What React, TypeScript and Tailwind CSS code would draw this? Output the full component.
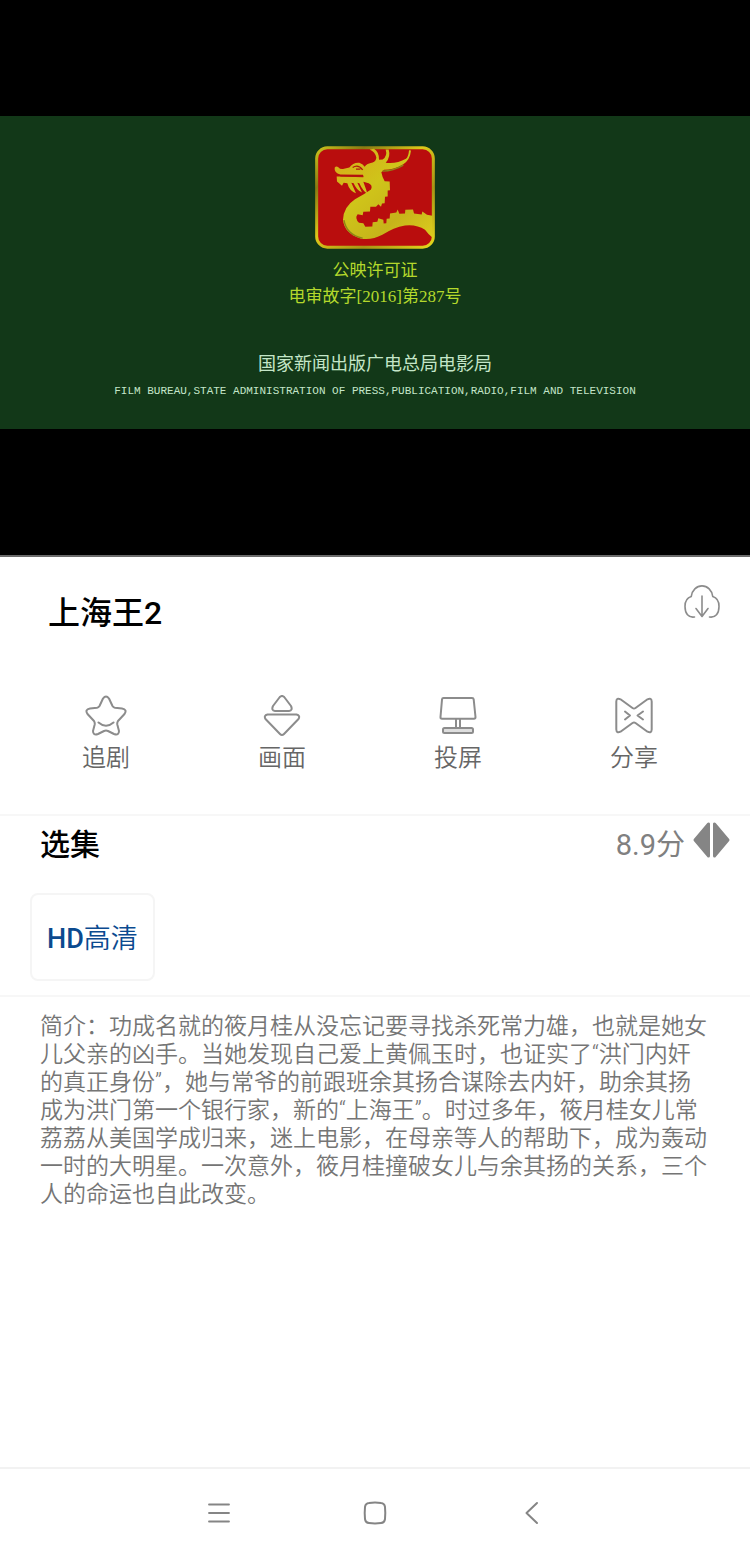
import type { ReactNode } from "react";

const stroke = {
  fill: "none",
  stroke: "currentColor",
  strokeLinecap: "round" as const,
  strokeLinejoin: "round" as const,
};

function DragonSeal() {
  return (
    <svg viewBox="45 32 360 308" className="h-[103px] w-[120px]" aria-hidden="true">
      <defs>
        <linearGradient id="gold" x1="0" y1="0" x2="1" y2="1">
          <stop offset="0" stopColor="#c9c21c" />
          <stop offset="0.2" stopColor="#8a7a12" />
          <stop offset="0.45" stopColor="#dcc81a" />
          <stop offset="0.7" stopColor="#a89414" />
          <stop offset="1" stopColor="#e6d81c" />
        </linearGradient>
        <linearGradient id="body" x1="0" y1="0" x2="1" y2="1">
          <stop offset="0" stopColor="#d8a818" />
          <stop offset="0.4" stopColor="#cfc41a" />
          <stop offset="0.7" stopColor="#c6b41a" />
          <stop offset="1" stopColor="#dccb1e" />
        </linearGradient>
      </defs>
      <rect x="50" y="37" width="350" height="298" rx="32" fill="#b90d0d" stroke="url(#gold)" strokeWidth="9" />
      <path
        fill="url(#body)"
        d="M104 97 Q108 90 115 95 Q121 103 132 100 L148 96 Q160 80 178 82 Q190 86 194 94 Q200 84 218 81 Q228 78 229 66 Q226 50 209 42 L222 40 Q238 50 237 73 L248 72 Q263 62 257 42 L266 42 Q273 64 257 82 Q290 86 318 70 Q326 62 327 44 L333 45 Q330 74 309 87 Q282 103 252 103 L244 110 Q247 126 254 137 L269 138 L270 164 L263 165 L263 183 L255 184 L254 203 L246 204 L243 214 L235 206 L228 214 L211 214 L210 228 L190 229 L188 239 L173 236 Q163 247 177 262 L190 263 L196 274 L217 273 L218 260 L232 259 L235 248 L250 253 L251 264 L259 263 L260 250 L269 249 L270 234 L289 231 L293 222 L298 235 L315 234 L316 223 L339 222 L342 234 L365 237 L367 228 L381 238 L397 241 L397 306 Q386 298 375 283 Q350 266 315 270 Q281 276 247 298 Q215 315 181 309 Q133 294 129 253 Q130 214 165 191 Q194 176 213 162 Q219 149 206 143 L190 139 L199 164 L202 175 Q188 165 178 143 L172 142 L186 171 Q169 163 161 143 L154 142 L168 173 Q148 166 142 143 L131 142 L126 151 L111 138 L110 123 L190 124 L189 118 L121 117 Q102 113 104 97 Z"
      />
      <path fill="none" stroke="#b0170f" strokeWidth="4" d="M158 96 Q174 85 188 103 M168 101 L181 101 M121 121 L190 123" />
      <path fill="none" stroke="#8e8515" strokeWidth="4" d="M132 254 Q139 298 188 308 M247 107 Q280 107 310 89" />
    </svg>
  );
}

function StarIcon() {
  return (
    <svg viewBox="0 0 42 42" className="size-[42px]" {...stroke} strokeWidth="2" aria-hidden="true">
      <path d="M18 3.5 Q21 -.5 24 3.5 L27.5 11 Q28.5 12.5 30 12.8 L37 13.5 Q42.5 14.5 39.5 19 L33 26 Q32 27.5 32.3 29.5 L34 36 Q34 40.8 29 39 L23 36 Q21 35.2 19 36 L13 39 Q8 40.8 8 36 L9.7 29.5 Q10 27.5 9 26 L2.5 19 Q-.5 14.5 5 13.5 L12 12.8 Q13.5 12.5 14.5 11 Z M13.5 27.5 Q21 34 28.5 27.5" />
    </svg>
  );
}

function PictureIcon() {
  return (
    <svg viewBox="0 0 42 42" className="size-[42px]" {...stroke} strokeWidth="2" aria-hidden="true">
      <path d="M18.8 2 Q21 0 23.2 2 L30 11 Q32 15.5 28 16 H14 Q10 15.5 12 11 Z M6.5 19.5 H35.5 Q39.5 20.5 37.5 24 L23 39 Q21 41 19 39 L4.5 24 Q2.5 20.5 6.5 19.5 Z" />
    </svg>
  );
}

function CastIcon() {
  return (
    <svg viewBox="0 0 42 42" className="size-[42px]" {...stroke} strokeWidth="2" aria-hidden="true">
      <path d="M6.5 3 H35 Q36.5 3 36.7 4.5 L38.5 22 Q38.5 23.7 37 23.7 H5 Q3.3 23.7 3.5 22 L5 4.5 Q5.2 3 6.5 3 Z M19 24 V33 M23 24 V33" />
      <rect x="6" y="33" width="30" height="5" rx="1.5" fill="#dedede" />
    </svg>
  );
}

function ShareIcon() {
  return (
    <svg viewBox="0 0 42 42" className="size-[42px]" {...stroke} strokeWidth="2" aria-hidden="true">
      <path d="M7.5 4.3 L19.5 13 Q21 14 22.5 13 L34.5 4.3 Q38.5 2.5 38.7 6.5 V34.5 Q38.5 38.5 34.5 36.7 L22.5 28 Q21 27 19.5 28 L7.5 36.7 Q3.5 38.5 3.3 34.5 V6.5 Q3.5 2.5 7.5 4.3 Z M12 16.5 L17 20.5 L12 24.5 M30 16.5 L24.5 20.5 L30 24.5" />
    </svg>
  );
}

const actions: { label: string; icon: ReactNode }[] = [
  { label: "追剧", icon: <StarIcon /> },
  { label: "画面", icon: <PictureIcon /> },
  { label: "投屏", icon: <CastIcon /> },
  { label: "分享", icon: <ShareIcon /> },
];

export default function App() {
  return (
    <div
      lang="zh-CN"
      className="flex min-h-screen flex-col bg-white font-['Roboto','Noto_Sans_CJK_SC',sans-serif] text-[#808080]"
    >
      <section className="border-b-2 border-[#6b6b6b] bg-black pt-[116px] pb-[126px]">
        <div className="flex h-[313px] flex-col items-center bg-[#123818] pt-[30px] font-['Liberation_Serif','Noto_Sans_CJK_SC',serif] whitespace-nowrap">
          <DragonSeal />
          <p className="mt-[9px] text-[17px] leading-[26px] text-[#b4d82c]">公映许可证</p>
          <p className="text-[17px] leading-[26px] text-[#b4d82c]">电审故字[2016]第287号</p>
          <p className="mt-10 text-[18px] leading-7 text-[#c4e6c8]">国家新闻出版广电总局电影局</p>
          <p className="font-['Liberation_Mono',monospace] text-[11px] leading-[26px] text-[#c4e6c8]">
            FILM BUREAU,STATE ADMINISTRATION OF PRESS,PUBLICATION,RADIO,FILM AND TELEVISION
          </p>
        </div>
      </section>

      <main>
        <header className="flex items-start justify-between pt-6 pr-[29px] pl-12">
          <h1 className="pt-2 text-[32px] leading-12 font-medium text-black">上海王2</h1>
          <button type="button" aria-label="下载" className="text-[#8c8c8c]">
            <svg viewBox="0 0 38 38" className="size-[38px]" {...stroke} strokeWidth="1.6" aria-hidden="true">
              <path d="M11.5 36 C5.5 37 2 32.5 2 25.5 C2 20.5 4.2 16.8 8.2 15.6 A10.9 12.4 0 0 1 29.8 15.6 C33.8 16.8 36 20.5 36 25.5 C36 32.5 32.5 37 26.5 36 M19 15 V35 M13 27.5 L19 35.5 L25 27.5" />
            </svg>
          </button>
        </header>

        <div className="grid grid-cols-4 border-b-2 border-[#f7f7f7] pt-[58px] pr-7 pb-[39px] pl-[18px]">
          {actions.map((action) => (
            <button key={action.label} type="button" className="flex flex-col items-center gap-1 text-[#8c8c8c]">
              {action.icon}
              <span className="text-[24px] leading-[34px] font-[350] text-[#666666]">{action.label}</span>
            </button>
          ))}
        </div>

        <section className="border-b-2 border-[#f7f7f7] pb-[14px]">
          <div className="flex items-start justify-between pr-5 pl-10">
            <h2 className="pt-[7px] text-[30px] leading-11 font-medium text-black">选集</h2>
            <div className="flex items-start gap-2">
              <span className="pt-[7px] text-[29px] leading-11">8.9分</span>
              <button type="button" aria-label="切换排序" className="mt-1">
                <svg
                  viewBox="0 0 37 40"
                  className="h-10 w-[37px]"
                  fill="#858585"
                  stroke="#858585"
                  strokeWidth="3"
                  strokeLinejoin="round"
                  aria-hidden="true"
                >
                  <path d="M15.5 4 V36 L2 20 Z M21.5 4 V36 L35 20 Z" />
                </svg>
              </button>
            </div>
          </div>
          <button
            type="button"
            className="mt-[26px] ml-[30px] h-[88px] rounded-lg border-2 border-[#f5f5f5] px-[15px] pt-1 text-[27px] font-[350] text-[#0b4a8f]"
          >
            <span className="font-medium">HD</span>高清
          </button>
        </section>

        <p className="pt-4 pr-[37px] pl-10 text-[23px] leading-7 font-[350] text-[#757575]">
          简介：功成名就的筱月桂从没忘记要寻找杀死常力雄，也就是她女儿父亲的凶手。当她发现自己爱上黄佩玉时，也证实了“洪门内奸的真正身份”，她与常爷的前跟班余其扬合谋除去内奸，助余其扬成为洪门第一个银行家，新的“上海王”。时过多年，筱月桂女儿常荔荔从美国学成归来，迷上电影，在母亲等人的帮助下，成为轰动一时的大明星。一次意外，筱月桂撞破女儿与余其扬的关系，三个人的命运也自此改变。
        </p>
      </main>

      <nav
        aria-label="系统导航"
        className="mt-auto flex h-[91px] items-center justify-center border-t-2 border-[#f2f2f2] pb-0.5 text-[#858585]"
      >
        <button type="button" aria-label="菜单" className="flex w-[156px] justify-center">
          <svg viewBox="0 0 26 26" className="size-[26px]" {...stroke} strokeWidth="1.8" aria-hidden="true">
            <path d="M3 4.5 H23 M3 13 H23 M3 21.5 H23" />
          </svg>
        </button>
        <button type="button" aria-label="主页" className="flex w-[156px] justify-center">
          <svg viewBox="0 0 26 26" className="size-[26px]" {...stroke} strokeWidth="2" aria-hidden="true">
            <path d="M7 3 Q13 2 19 3 Q22.5 3.3 23 7 Q23.6 13 23 19 Q22.5 22.7 19 23 Q13 23.8 7 23 Q3.5 22.7 3 19 Q2.4 13 3 7 Q3.5 3.3 7 3 Z" />
          </svg>
        </button>
        <button type="button" aria-label="返回" className="flex w-[156px] justify-center">
          <svg viewBox="0 0 26 26" className="size-[26px]" {...stroke} strokeWidth="2" aria-hidden="true">
            <path d="M19 3 L8.5 13 L19 23" />
          </svg>
        </button>
      </nav>
    </div>
  );
}
